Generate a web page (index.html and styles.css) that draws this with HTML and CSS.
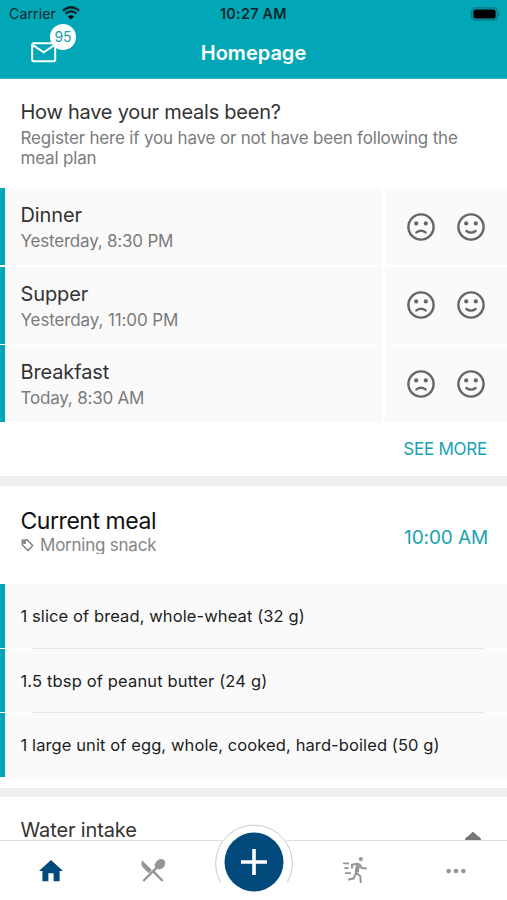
FILE: index.html
```html
<!DOCTYPE html>
<html lang="en">
<head>
<meta charset="utf-8">
<title>Homepage</title>
<link rel="stylesheet" href="styles.css">
</head>
<body>
<svg class="defs" aria-hidden="true">
  <symbol id="sad" viewBox="0 0 28 28"><circle cx="14" cy="14" r="12.6" fill="none" stroke="currentColor" stroke-width="2.4"/><circle cx="9.2" cy="10.4" r="2.1" fill="currentColor"/><circle cx="18.8" cy="10.4" r="2.1" fill="currentColor"/><path d="M9.4 19.4Q14 15.9 18.6 19.4" fill="none" stroke="currentColor" stroke-width="2.4" stroke-linecap="round"/></symbol>
  <symbol id="happy" viewBox="0 0 28 28"><circle cx="14" cy="14" r="12.6" fill="none" stroke="currentColor" stroke-width="2.4"/><circle cx="9.2" cy="10.4" r="2.1" fill="currentColor"/><circle cx="18.8" cy="10.4" r="2.1" fill="currentColor"/><path d="M9.4 18Q14 21.2 18.6 18" fill="none" stroke="currentColor" stroke-width="2.4" stroke-linecap="round"/></symbol>
</svg>
<div class="app">
  <header class="top">
    <div class="status">
      <span class="carrier">Carrier</span>
      <svg class="wifi" viewBox="0 0 18 14"><path d="M9 13.6 5.9 10.5Q9 8 12.1 10.5Z"/><path d="M3.5 7.6Q9 3.1 14.5 7.6M.9 4.7Q9-2.3 17.1 4.7" fill="none" stroke="#06262b" stroke-width="2.4"/></svg>
      <span class="clock">10:27 AM</span>
      <svg class="battery" viewBox="0 0 30 14"><rect x=".8" y=".8" width="25.4" height="12.4" rx="3.8" fill="none" stroke="#087580" stroke-width="1.3"/><rect x="2.4" y="2.4" width="22.2" height="9.2" rx="2.2"/><path d="M27.4 4.8q2.3 2.2 0 4.4z" fill="#087580"/></svg>
    </div>
    <div class="bar">
      <div class="inbox">
        <svg class="mail" viewBox="0 0 26 21"><rect x="1.2" y="1.2" width="23" height="18" rx="1.6"/><path d="M2 3.2 12.7 10.4 23.4 3.2"/></svg>
        <span class="badge">95</span>
      </div>
      <h1 class="title">Homepage</h1>
    </div>
  </header>

  <section class="meals">
    <div class="intro">
      <h2 class="heading ask">How have your meals been?</h2>
      <p class="muted hint">Register here if you have or not have been following the<br>meal plan</p>
    </div>
    <div class="meal-list">
      <div class="meal"><div class="info"><h3 class="heading">Dinner</h3><p class="muted">Yesterday, 8:30 PM</p></div><div class="faces"><svg><use href="#sad"/></svg><svg><use href="#happy"/></svg></div></div>
      <div class="meal"><div class="info"><h3 class="heading">Supper</h3><p class="muted late">Yesterday, 11:00 PM</p></div><div class="faces"><svg><use href="#sad"/></svg><svg><use href="#happy"/></svg></div></div>
      <div class="meal"><div class="info"><h3 class="heading">Breakfast</h3><p class="muted">Today, 8:30 AM</p></div><div class="faces"><svg><use href="#sad"/></svg><svg><use href="#happy"/></svg></div></div>
    </div>
    <div class="more"><span>SEE MORE</span></div>
  </section>

  <section class="current">
    <div class="current-head">
      <div>
        <h2 class="current-title">Current meal</h2>
        <p class="tagline"><svg class="tag" viewBox="0 0 13 13"><path d="M1.2 1.2 6.3 1 11.7 6.5 7 11.5 1.4 6Z"/><circle cx="3.5" cy="3.4" r=".9"/></svg><span class="muted snack">Morning snack</span></p>
      </div>
      <span class="time">10:00 AM</span>
    </div>
    <div class="foods">
      <p class="food">1 slice of bread, whole-wheat (32 g)</p>
      <p class="food">1.5 tbsp of peanut butter (24 g)</p>
      <p class="food">1 large unit of egg, whole, cooked, hard-boiled (50 g)</p>
    </div>
  </section>

  <section class="water">
    <h2 class="heading">Water intake</h2>
    <svg class="drop" viewBox="0 0 16 8"><path d="M0 8Q0 5.4 3 4.3L6.5 1Q8-.8 9.5 1L13 4.3Q16 5.4 16 8Z"/></svg>
  </section>

  <nav class="tabs">
    <div class="tab"><svg class="home" viewBox="0 0 24 22"><path d="M12 0 24 11H20.6V21.3H14.6V13.2H9.4V21.3H3.4V11H0Z"/></svg></div>
    <div class="tab"><svg class="cutlery" viewBox="0 0 24 24"><path d="M1.1 1.6 11 11.1 7.8 14.3 2 8.5Q-.8 5.2 1.1 1.6Z"/><ellipse cx="19" cy="5.2" rx="5.7" ry="4.6" transform="rotate(-40 19 5.2)"/><path d="M16.2 8.2 2.3 22M12.2 12.3 21.7 22" fill="none" stroke="#959595" stroke-width="2.4"/></svg></div>
    <div class="tab center">
      <svg class="plus" viewBox="0 0 78 78"><circle cx="39" cy="39" r="38.5" fill="#fff"/><path d="M5.5 59A38.3 38.3 0 1 1 72.5 59" fill="none" stroke="#c9c9cb"/><circle cx="39" cy="39" r="29.5" fill="#014a7b"/><path d="M26 39H52M39 26V52" stroke="#fff" stroke-width="3.6"/></svg>
    </div>
    <div class="tab"><svg class="run" viewBox="0 0 26 28"><circle cx="18.8" cy="3" r="2.1" fill="#959595" stroke="none"/><path d="M10 12.4V8.7L14.7 7.7 17.6 8.6 19.8 12 24.8 12.5M15.5 9 14 16.4 18.3 20.2 18.8 26.8M14 16.8 11.8 22.3 6.2 23.8"/><path d="M15.9 9.5 14.7 16.2" stroke-width="4"/><path d="M1 7.3H7M2.3 12.2H6.6M3 17.1H9" stroke-width="1.8"/></svg></div>
    <div class="tab"><svg class="dots" viewBox="0 0 20 6"><circle cx="2.6" cy="3" r="2.3"/><circle cx="10" cy="3" r="2.3"/><circle cx="17.4" cy="3" r="2.3"/></svg></div>
  </nav>
</div>
</body>
</html>
```
FILE: styles.css
```css
* { box-sizing: border-box; margin: 0; padding: 0; }
body { background: #fff; font-family: Inter, "Liberation Sans", sans-serif; }
svg { display: block; flex: none; overflow: visible; }
.defs { width: 0; height: 0; position: absolute; }
.app { position: relative; width: 507px; height: 900px; overflow: hidden; display: flex; flex-direction: column; white-space: nowrap; }
.top { height: 79px; flex: none; background: #02a7b7; border-bottom: 1px solid #26b2bf; }
.status { height: 28px; display: grid; grid-template-columns: 53px 149px 1fr 36px; align-items: center; padding-left: 9px; color: #06262b; }
.carrier { font-size: 14px; letter-spacing: .15px; line-height: 28px; }
.wifi { width: 18px; height: 14px; margin-top: -2px; }
.clock { font-size: 14.3px; font-weight: 600; letter-spacing: .3px; line-height: 28px; margin-left: 9px; }
.battery { width: 30px; height: 14px; margin-top: -1px; }
.bar { height: 50px; display: flex; justify-content: center; }
.inbox { position: absolute; left: 31px; top: 24px; width: 46px; height: 40px; }
.mail { width: 26px; height: 21px; margin-top: 18px; fill: none; stroke: #fff; stroke-width: 2; }
.badge { position: absolute; left: 19px; top: 0; width: 26px; height: 26px; border-radius: 50%; background: #fff; color: #1b9eac; font-size: 14px; line-height: 26px; text-align: center; }
.title { font-size: 20px; font-weight: 600; line-height: 24px; margin-top: 13px; color: #fff; }

.heading { font-size: 20px; font-weight: 400; line-height: 24px; letter-spacing: -.13px; color: #333; }
.ask { letter-spacing: -.25px; }
.muted { font-size: 17px; line-height: 20px; letter-spacing: -.2px; color: #7b7b7b; }
.late { letter-spacing: -.12px; }
.meals { height: 397px; flex: none; }
.intro { height: 109px; padding: 21px 0 0 20.5px; }
.hint { margin-top: 4px; line-height: 20px; letter-spacing: -.18px; }
.meal-list { display: grid; grid-template-rows: repeat(3, 1fr); gap: 1.5px; height: 234px; }
.meal { display: flex; gap: 3px; border-left: 5px solid #02a7b7; }
.info { width: 377px; background: #fafafa; padding: 15.4px 0 0 15.5px; }
.info .muted { margin-top: 4px; }
.faces { flex: 1; background: #fafafa; display: flex; gap: 22px; align-items: center; padding-left: 22px; color: #666; }
.faces svg { width: 28px; height: 28px; }
.more { height: 54px; display: flex; justify-content: flex-end; align-items: center; padding-right: 20px; font-size: 17px; letter-spacing: -.25px; color: #19a3b1; }

.current { border-top: 10px solid #efeff2; height: 312px; flex: none; }
.current-head { height: 98px; display: flex; justify-content: space-between; padding: 20px 19px 0 20.5px; }
.current-title { font-size: 23px; font-weight: 400; line-height: 30px; letter-spacing: -.45px; color: #111; }
.tagline { display: flex; align-items: center; height: 18px; overflow: hidden; }
.tag { width: 13px; height: 13px; margin-right: 6.5px; fill: none; stroke: #777; stroke-width: 1.3; }
.snack { letter-spacing: -.23px; color: #858585; }
.time { font-size: 19px; line-height: 24px; letter-spacing: -.1px; margin-top: 20px; color: #19a3b1; }
.foods { display: grid; grid-template-rows: repeat(3, 1fr); gap: 1px; height: 193px; }
.food { position: relative; display: flex; align-items: center; padding-left: 15.5px; border-left: 5px solid #02a7b7; background: #fafafa; font-size: 16.5px; letter-spacing: .1px; color: #1d1d1d; }
.food:nth-child(2) { padding-top: 1px; letter-spacing: .15px; }
.food + .food::before { content: ""; position: absolute; left: 27px; right: 23px; top: -1px; height: 1px; background: #e7e7e7; }

.water { border-top: 9px solid #efeff2; height: 52px; flex: none; display: flex; justify-content: space-between; padding: 21px 26px 0 20.5px; }
.drop { width: 16px; height: 8px; margin-top: 14px; fill: #777; }
.tabs { height: 60px; flex: none; display: grid; grid-template-columns: repeat(5, 1fr); border-top: 1px solid #dedee0; background: #fff; position: relative; }
.tab { display: flex; justify-content: center; align-items: flex-start; }
.home { width: 24px; height: 22px; margin-top: 19px; margin-left: 1px; fill: #014a7b; }
.cutlery { width: 24px; height: 24px; margin-top: 18px; margin-left: 1px; fill: #959595; }
.plus { width: 78px; height: 78px; margin-top: -18px; margin-left: 1px; }
.run { width: 26px; height: 28px; margin-top: 15px; fill: none; stroke: #959595; stroke-width: 2; }
.dots { width: 20px; height: 6px; margin-top: 27px; fill: #959595; }
```
